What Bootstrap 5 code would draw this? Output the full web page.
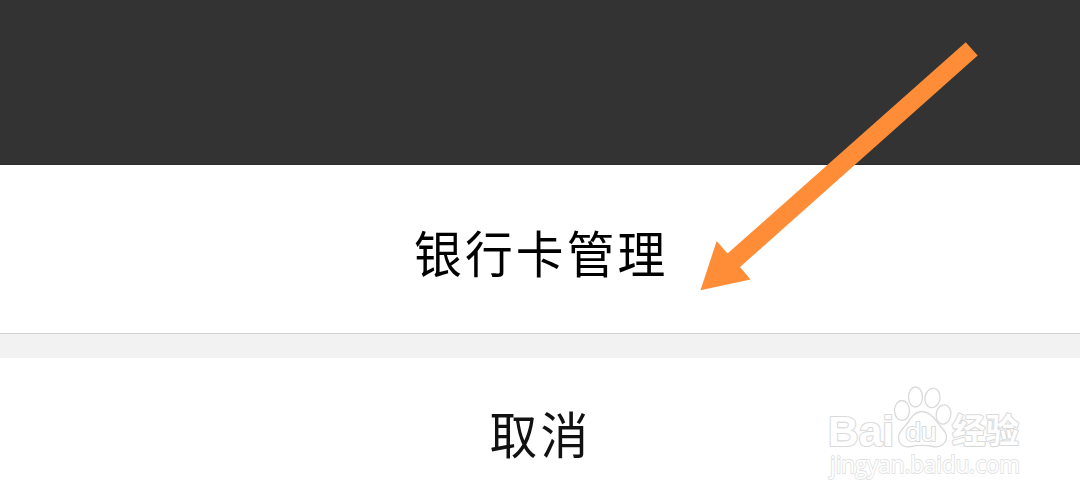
<!DOCTYPE html>
<html lang="zh-CN">
<head>
<meta charset="utf-8">
<meta name="viewport" content="width=device-width, initial-scale=1">
<title>银行卡管理</title>
<link href="https://cdn.jsdelivr.net/npm/bootstrap@5.3.0/dist/css/bootstrap.min.css" rel="stylesheet">
<style>
body{font-family:"Liberation Sans","Noto Sans CJK SC",sans-serif}
.screen{width:1080px;height:502px;background:#fff}
.backdrop-area{height:165px;background:#333;border-bottom:1px solid #2b2b2b}
.sheet-item{background:#fff;color:#000;border:0;border-radius:0;font:400 50px/60px "Noto Sans CJK SC",sans-serif;white-space:nowrap}
.manage{height:168px;padding:3px 1px 0 0}
.cancel{height:144px;color:#111;padding:3px 2px 0 0}
.sheet-item span{display:block;transform:scaleX(.955)}
.manage span{letter-spacing:3.3px;margin-right:-3px}
.cancel span{letter-spacing:3.5px;margin-right:-3px}
.sheet-gap{height:25px;background:#f2f2f2;border-top:1px solid #d2d2d2}
.overlay{pointer-events:none}
</style>
<script src="https://cdn.jsdelivr.net/npm/bootstrap@5.3.0/dist/js/bootstrap.bundle.min.js"></script>
</head>
<body class="m-0 overflow-hidden">
<main class="screen position-relative d-flex flex-column overflow-hidden">
  <div class="backdrop-area flex-shrink-0"></div>
  <button class="sheet-item manage d-flex align-items-center justify-content-center flex-shrink-0"><span>银行卡管理</span></button>
  <div class="sheet-gap flex-shrink-0"></div>
  <button class="sheet-item cancel d-flex align-items-center justify-content-center flex-shrink-0"><span>取消</span></button>
  <svg class="overlay position-absolute top-0 start-0" width="1080" height="502" viewBox="0 0 1080 502" aria-hidden="true">
    <path fill="#ff8d38" d="M965.7 42.3 977.7 55.5 740 267 750.5 279.5 700.5 290.3 716.7 241 727.5 253.5Z"/>
    <g fill="#fff" stroke="#dadada" stroke-width="1.3" stroke-linejoin="round">
      <g stroke-width="2.2" paint-order="stroke" font-weight="700">
        <text x="828" y="445.5" font-family="Liberation Sans" font-size="43" textLength="66" lengthAdjust="spacingAndGlyphs">Bai</text>
        <text x="952" y="443" font-family="Noto Sans CJK SC" font-size="34" textLength="67" lengthAdjust="spacingAndGlyphs">经验</text>
        <text x="830" y="473" font-family="Open Sans" font-weight="400" font-size="23.5" textLength="190" lengthAdjust="spacingAndGlyphs" stroke="#e2e2e2" stroke-width="1.8">jingyan.baidu.com</text>
      </g>
      <ellipse cx="902" cy="410.5" rx="7.5" ry="10"/>
      <ellipse cx="915.5" cy="397" rx="7" ry="10"/>
      <ellipse cx="932.5" cy="398" rx="7.5" ry="9.7" transform="rotate(10 932.5 398)"/>
      <ellipse cx="943.5" cy="414.5" rx="7.3" ry="9.7" transform="rotate(10 943.5 414.5)"/>
      <path d="M922 411.5C915 411.5 911.5 417 908 422.5 904 428 898 431.5 898.5 438 899 445 905 448 911 446.5 919 445 926 445 933 446.5 940 448 946 444 946.5 437 947 431 940 427 937 422 933 416 929 411.5 922 411.5Z"/>
      <text x="905.5" y="441" font-family="Liberation Sans" font-size="26" textLength="31" lengthAdjust="spacingAndGlyphs" stroke-width="2" paint-order="stroke">du</text>
    </g>
  </svg>
</main>
</body>
</html>
